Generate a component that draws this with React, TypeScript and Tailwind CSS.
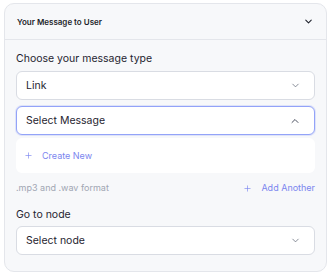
import { ChevronDown, ChevronUp, Plus } from "lucide-react";

function SelectBox({ value, open }: { value: string; open?: boolean }) {
  return (
    <div
      className={
        open
          ? "flex h-[29px] items-center justify-between rounded-[6px] border border-[#93a3f8] bg-white pl-[9px] pr-[13px] shadow-[0_0_0_1px_rgba(147,163,248,0.25)]"
          : "flex h-[29px] items-center justify-between rounded-[6px] border border-[#d9dce3] bg-white pl-[9px] pr-[13px]"
      }
    >
      <span className="text-[10.5px] text-[#1f2430]">{value}</span>
      {open ? (
        <ChevronUp size={12} strokeWidth={2} className="text-[#4b5060]" />
      ) : (
        <ChevronDown size={11} strokeWidth={1.75} className="text-[#6b7280]" />
      )}
    </div>
  );
}

export default function App() {
  return (
    <div
      className="min-h-[275px] bg-white pl-[4px] pt-[3px]"
      style={{ fontFamily: "Inter, 'Noto Sans', sans-serif" }}
    >
      <div className="w-[323px] rounded-[10px] border border-[#e4e6eb] bg-[#f7f8fa]">
        <div className="flex h-[36px] items-center justify-between border-b border-[#e4e6eb] px-[12px]">
          <span className="text-[8px] font-semibold text-[#1c1f2a]">Your Message to User</span>
          <ChevronDown size={11} strokeWidth={2.25} className="text-[#1c1f2a]" />
        </div>

        <div className="px-[11px] pb-[16px] pt-[11px]">
          <div className="text-[10.5px] leading-[16px] text-[#1f2430]">Choose your message type</div>
          <div className="mt-[4px]">
            <SelectBox value="Link" />
          </div>
          <div className="mt-[6px]">
            <SelectBox value="Select Message" open />
          </div>
          <div className="mt-[3px] flex h-[35px] items-center gap-[9px] rounded-[6px] bg-white pl-[8px] text-[#7b86ef]">
            <Plus size={9} strokeWidth={1.75} />
            <span className="text-[9px]">Create New</span>
          </div>

          <div className="mt-[8px] flex items-center justify-between text-[9px] leading-[14px]">
            <span className="text-[#a1a6b3]">.mp3 and .wav format</span>
            <span className="flex items-center gap-[9px] text-[#7b86ef]">
              <Plus size={9} strokeWidth={1.75} />
              Add Another
            </span>
          </div>

          <div className="mt-[12px] text-[10.5px] leading-[16px] text-[#1f2430]">Go to node</div>
          <div className="mt-[3px]">
            <SelectBox value="Select node" />
          </div>
        </div>
      </div>
    </div>
  );
}
